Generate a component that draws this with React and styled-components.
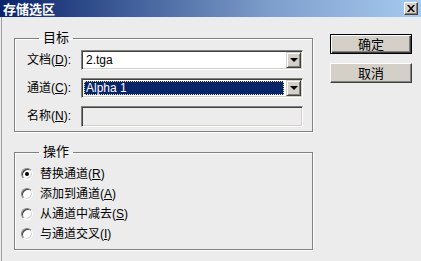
import styled, { createGlobalStyle } from "styled-components"

const GlobalStyle = createGlobalStyle`
  html, body {
    margin: 0;
    padding: 0;
    background: #ececec;
  }
  body {
    font-family: "Liberation Sans", "Noto Sans CJK SC", sans-serif;
    font-size: 12px;
    color: #000;
  }
`

const actions = [
  { text: "替换通道", key: "R", checked: true },
  { text: "添加到通道", key: "A" },
  { text: "从通道中减去", key: "S" },
  { text: "与通道交叉", key: "I" },
]

function App() {
  return (
    <>
      <GlobalStyle />
      <Dialog>
        <TitleBar>
          <Title>存储选区</Title>
          <CloseButton type="button">
            <svg width="8" height="7" viewBox="0 0 8 7">
              <path d="M0 0h2l2 2.5L6 0h2L5 3.5 8 7H6L4 4.5 2 7H0l3-3.5z" fill="#000" />
            </svg>
          </CloseButton>
        </TitleBar>
        <Body>
          <Groups>
            <Group $rowGap={8}>
              <Legend>目标</Legend>
              <FieldRow>
                <Label>文档(<u>D</u>):</Label>
                <Combo>
                  <ComboText>2.tga</ComboText>
                  <ArrowButton><Arrow /></ArrowButton>
                </Combo>
              </FieldRow>
              <FieldRow>
                <Label>通道(<u>C</u>):</Label>
                <Combo>
                  <ComboText $selected>Alpha 1</ComboText>
                  <ArrowButton><Arrow /></ArrowButton>
                </Combo>
              </FieldRow>
              <FieldRow>
                <Label>名称(<u>N</u>):</Label>
                <TextField $disabled />
              </FieldRow>
            </Group>
            <Group $gap $rowGap={0}>
              <Legend>操作</Legend>
              {actions.map(action => (
                <RadioRow key={action.key}>
                  <Radio $checked={action.checked} />
                  <RadioText>
                    {action.text}(<u>{action.key}</u>)
                  </RadioText>
                </RadioRow>
              ))}
            </Group>
          </Groups>
          <Buttons>
            <Button $default type="button">确定</Button>
            <Button type="button">取消</Button>
          </Buttons>
        </Body>
      </Dialog>
    </>
  )
}

const Dialog = styled.div`
  width: 421px;
  height: 261px;
  display: flex;
  flex-direction: column;
  overflow: hidden;
`

const TitleBar = styled.div`
  height: 17px;
  flex-shrink: 0;
  display: flex;
  align-items: center;
  justify-content: space-between;
  padding: 0 3px 0 3px;
  background: linear-gradient(to right, #0a246a, #3f5d98 30%, #7f9fcc 65%, #a6caf0);
`

const Title = styled.div`
  color: #fff;
  font-family: "Noto Sans CJK SC", sans-serif;
  font-weight: bold;
  font-size: 13px;
  line-height: 17px;
`

const CloseButton = styled.button`
  width: 14px;
  height: 13px;
  margin-top: -1px;
  padding: 0;
  display: flex;
  align-items: center;
  justify-content: center;
  background: #d4d0c8;
  border: 1px solid;
  border-color: #fff #404040 #404040 #fff;
  box-shadow: inset -1px -1px 0 #808080;
`

const Body = styled.div`
  flex: 1;
  display: flex;
  align-items: flex-start;
  padding: 13px 0 0 12px;
  border-left: 1px solid #a0a0a0;
  margin-left: 1px;
`

const Groups = styled.div`
  display: flex;
  flex-direction: column;
  width: 299px;
`

const Group = styled.fieldset`
  margin: ${props => (props.$gap ? "12px" : "0")} 0 0 0;
  padding: 4px 9px 5px 12px;
  border: 1px solid #808080;
  box-shadow: 1px 1px 0 #fff, inset 1px 1px 0 #fff;
  display: flex;
  flex-direction: column;
  gap: ${props => props.$rowGap}px;
  min-width: 0;
`

const Legend = styled.legend`
  padding: 0 4px;
  margin-left: 12px;
  line-height: 16px;
  font-size: 13px;
`

const FieldRow = styled.div`
  display: flex;
  align-items: center;
  height: 20px;
`

const Label = styled.div`
  width: 54px;
  flex-shrink: 0;
  font-size: 12px;
  line-height: 16px;
`

const Combo = styled.div`
  flex: 1;
  height: 20px;
  box-sizing: border-box;
  display: flex;
  align-items: center;
  background: #fff;
  border: 1px solid;
  border-color: #808080 #fff #fff #808080;
  box-shadow: inset 1px 1px 0 #404040, inset -1px -1px 0 #d4d0c8;
  padding: 2px;
  gap: 2px;
`

const ComboText = styled.div`
  flex: 1;
  height: 14px;
  display: flex;
  align-items: center;
  padding: 0 2px;
  font-size: 12px;
  background: ${props => (props.$selected ? "#0a246a" : "transparent")};
  color: ${props => (props.$selected ? "#fff" : "#000")};
  outline: ${props => (props.$selected ? "1px dotted #e8e6a0" : "none")};
  outline-offset: -1px;
`

const ArrowButton = styled.div`
  width: 15px;
  height: 16px;
  box-sizing: border-box;
  display: flex;
  align-items: center;
  justify-content: center;
  background: #d4d0c8;
  border: 1px solid;
  border-color: #d4d0c8 #404040 #404040 #d4d0c8;
  box-shadow: inset 1px 1px 0 #fff, inset -1px -1px 0 #808080;
  margin-right: -1px;
`

const Arrow = styled.div`
  width: 0;
  height: 0;
  border-left: 4px solid transparent;
  border-right: 4px solid transparent;
  border-top: 4px solid #000;
`

const TextField = styled.div`
  flex: 1;
  height: 21px;
  box-sizing: border-box;
  background: ${props => (props.$disabled ? "#ececec" : "#fff")};
  border: 1px solid;
  border-color: #808080 #fff #fff #808080;
  box-shadow: inset 1px 1px 0 #404040, inset -1px -1px 0 #d4d0c8;
`

const RadioRow = styled.div`
  display: flex;
  align-items: center;
  height: 20px;
  gap: 7px;
  margin-left: -6px;
`

const RadioText = styled.span`
  font-size: 12px;
  line-height: 16px;
`

const Radio = styled.span`
  width: 12px;
  height: 12px;
  flex-shrink: 0;
  box-sizing: border-box;
  border-radius: 50%;
  background: #fff;
  border: 1px solid;
  border-color: #808080 #fff #fff #808080;
  box-shadow: inset 1px 1px 0 #404040, inset -1px -1px 0 #d4d0c8;
  display: flex;
  align-items: center;
  justify-content: center;

  &::after {
    content: "";
    width: 4px;
    height: 4px;
    border-radius: 50%;
    background: ${props => (props.$checked ? "#000" : "transparent")};
  }
`

const Buttons = styled.div`
  display: flex;
  flex-direction: column;
  gap: 9px;
  margin: 4px 0 0 17px;
`

const Button = styled.button`
  width: 82px;
  height: 20px;
  padding: 0;
  font-family: "Noto Sans CJK SC", sans-serif;
  font-size: 13px;
  line-height: 16px;
  color: #000;
  background: #d4d0c8;
  border: 1px solid;
  border-color: ${props => (props.$default ? "#000" : "#fff #404040 #404040 #fff")};
  box-shadow: ${props =>
    props.$default
      ? "inset 1px 1px 0 #fff, inset -1px -1px 0 #404040, inset -2px -2px 0 #808080"
      : "inset -1px -1px 0 #808080"};
`

export default App
